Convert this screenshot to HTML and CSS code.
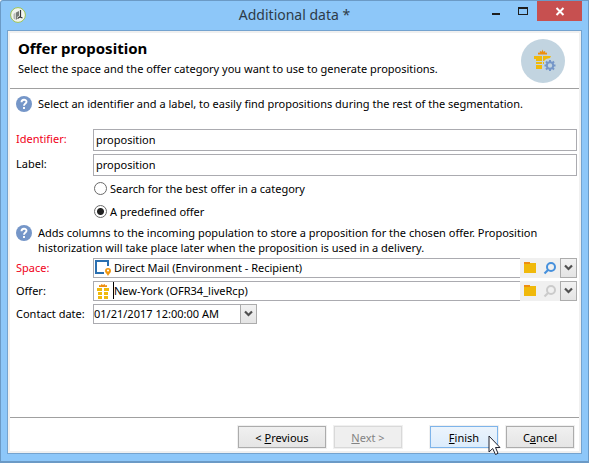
FILE: index.html
```html
<!DOCTYPE html>
<html lang="en">
<head>
<meta charset="utf-8">
<title>Additional data</title>
<link rel="stylesheet" href="styles.css">
</head>
<body>
<div class="window">
  <header class="titlebar">
    <svg class="app-icon" width="16" height="16" viewBox="0 0 16 16" aria-hidden="true">
      <circle cx="8" cy="8" r="7.4" fill="#f1f4ee" stroke="#9dc352"/>
      <path d="M3.500 7 5.500 5.500V13l-2-1.500z" fill="#b4b6b4"/>
      <path d="M6 5.500 9 4v5l-2 1v2.500H6z" fill="#777b78"/>
      <path d="M10.500 3v7M10.500 9.500 7.500 11.500M10 10l2.500 1" stroke="#333" stroke-width="1.200" fill="none"/>
    </svg>
    <h1 class="window-title">Additional data *</h1>
    <div class="window-controls">
      <button class="control" type="button" aria-label="Minimize"><svg width="26" height="20" viewBox="0 0 26 20"><path d="M9 12h8v2H9z" fill="#1e1e1e"/></svg></button>
      <button class="control" type="button" aria-label="Maximize"><svg width="26" height="20" viewBox="0 0 26 20"><path d="M9 6h10v8H9zM10 8v5h8V8z" fill="#1e1e1e" fill-rule="evenodd"/></svg></button>
      <button class="control control-close" type="button" aria-label="Close"><svg width="45" height="20" viewBox="0 0 45 20"><path d="M19.500 7 26.500 14M26.500 7l-7 7" stroke="#fff" stroke-width="2"/></svg></button>
    </div>
  </header>
  <main class="client">
    <section class="banner">
      <div>
        <h2 class="banner-title">Offer proposition</h2>
        <p class="banner-text">Select the space and the offer category you want to use to generate propositions.</p>
      </div>
      <svg class="banner-icon" width="44" height="44" viewBox="0 0 44 44" aria-hidden="true">
        <circle cx="22" cy="22" r="22" fill="#c2d4e0"/>
        <path d="M17 15.500v-2l1.500.5.5-2 1.700.8.800-2.300.8 2.300 1.700-.8.500 2 1.500-.5v2z" fill="#ee8e10"/>
        <path d="M13 17h8v5h-6v-2h-2zM22 17h8l-1 2-4 1-2 2h-1zM15 23h6v2h-6zM22 23h1v2h-1zM15 26h6v4h-6z" fill="#f0b90b"/>
        <path d="M29 21v11M23.500 26.500h11M25 22.500l8 8M33 22.500l-8 8" stroke="#7596c8" stroke-width="2"/>
        <circle cx="29" cy="26.500" r="3.200" fill="#c2d4e0" stroke="#7596c8" stroke-width="2"/>
      </svg>
    </section>
    <form class="form">
      <div class="hint">
        <svg width="16" height="16" viewBox="0 0 16 16" aria-hidden="true"><circle cx="8" cy="8" r="8" fill="#7596c8"/><path d="M5.500 6.200c0-3.200 5-3.200 5-.4C10.500 7.600 8 7.500 8 9.700M8 11v2" fill="none" stroke="#fff" stroke-width="1.900"/></svg>
        <p>Select an identifier and a label, to easily find propositions during the rest of the segmentation.</p>
      </div>
      <div class="row row-text">
        <label class="required" for="identifier">Identifier:</label>
        <input class="text" id="identifier" type="text" value="proposition">
      </div>
      <div class="row row-text">
        <label for="label">Label:</label>
        <input class="text" id="label" type="text" value="proposition">
      </div>
      <div class="choices">
        <label class="choice"><input type="radio" name="mode"> Search for the best offer in a category</label>
        <label class="choice"><input type="radio" name="mode" checked> A predefined offer</label>
      </div>
      <div class="hint">
        <svg width="16" height="16" viewBox="0 0 16 16" aria-hidden="true"><circle cx="8" cy="8" r="8" fill="#7596c8"/><path d="M5.500 6.200c0-3.200 5-3.200 5-.4C10.500 7.600 8 7.500 8 9.700M8 11v2" fill="none" stroke="#fff" stroke-width="1.900"/></svg>
        <p>Adds columns to the incoming population to store a proposition for the chosen offer. Proposition historization will take place later when the proposition is used in a delivery.</p>
      </div>
      <div class="row">
        <label class="required" for="space">Space:</label>
        <div class="picker">
          <svg class="field-icon" width="18" height="18" viewBox="0 0 18 18" aria-hidden="true">
            <path d="M10 14H2V2h12v5" fill="none" stroke="#2a6fb0" stroke-width="2"/>
            <path d="M14 17c-1-2.200-3-3.300-3-5a3 3 0 0 1 6 0c0 1.700-2 2.800-3 5z" fill="#f0960f"/><circle cx="14" cy="11.500" r="1.100" fill="#fff"/>
          </svg>
          <input class="text" id="space" type="text" value="Direct Mail (Environment - Recipient)">
          <button class="tool" type="button" aria-label="Open folder"><svg width="20" height="18" viewBox="0 0 20 18"><path d="M4 3h6v2H4z" fill="#ee8e10"/><path d="M4 5h6v-1h6v10H4z" fill="#f0b90b"/></svg></button>
          <button class="tool" type="button" aria-label="Search"><svg width="20" height="18" viewBox="0 0 20 18"><circle cx="11" cy="8" r="4" fill="none" stroke="#4690dc" stroke-width="2"/><path d="M8 11l-3.500 3.500" stroke="#4690dc" stroke-width="2.200"/></svg></button>
          <button class="drop" type="button" aria-label="Show spaces"><svg width="9" height="8" viewBox="0 0 9 8"><path d="M1 1.500 4.500 5 8 1.500" fill="none" stroke="#505050" stroke-width="2.200"/></svg></button>
        </div>
      </div>
      <div class="row">
        <label for="offer">Offer:</label>
        <div class="picker">
          <svg class="field-icon" width="18" height="18" viewBox="0 0 18 18" aria-hidden="true">
            <path d="M5 5V3l1.500.5L7.500 2l1.500 1L10.500 2l1 1.500L13 3v2z" fill="#ee8e10"/>
            <path d="M3 6h5v3H3zM10 6h5v3h-5zM4 10h4v3H4zM10 10h4v3h-4zM4 14h4v3H4zM10 14h4v3h-4z" fill="#f0b90b"/>
          </svg>
          <span class="caret"></span>
          <input class="text" id="offer" type="text" value="New-York (OFR34_liveRcp)">
          <button class="tool" type="button" aria-label="Open folder"><svg width="20" height="18" viewBox="0 0 20 18"><path d="M4 3h6v2H4z" fill="#ee8e10"/><path d="M4 5h6v-1h6v10H4z" fill="#f0b90b"/></svg></button>
          <button class="tool" type="button" aria-label="Search" disabled><svg width="20" height="18" viewBox="0 0 20 18"><circle cx="11" cy="8" r="4" fill="none" stroke="#cbcbcb" stroke-width="2"/><path d="M8 11l-3.500 3.500" stroke="#cbcbcb" stroke-width="2.200"/></svg></button>
          <button class="drop" type="button" aria-label="Show offers"><svg width="9" height="8" viewBox="0 0 9 8"><path d="M1 1.500 4.500 5 8 1.500" fill="none" stroke="#505050" stroke-width="2.200"/></svg></button>
        </div>
      </div>
      <div class="row">
        <label for="date">Contact date:</label>
        <div class="picker picker-date">
          <input class="text" id="date" type="text" value="01/21/2017 12:00:00 AM">
          <button class="drop" type="button" aria-label="Choose date"><svg width="9" height="8" viewBox="0 0 9 8"><path d="M1 1.500 4.500 5 8 1.500" fill="none" stroke="#505050" stroke-width="2.200"/></svg></button>
        </div>
      </div>
    </form>
    <footer class="actions">
      <button class="button button-wide" type="button">&lt; <u>P</u>revious</button>
      <button class="button" type="button" disabled><u>N</u>ext &gt;</button>
      <button class="button button-default" type="button"><u>F</u>inish
        <svg class="cursor" width="13" height="20" viewBox="0 0 13 20" aria-hidden="true"><path d="M1 1v16l3.700-3.500L7.500 19.500l2.500-1.200L7.500 12.500H12z" fill="#fff" stroke="#23232f"/></svg>
      </button>
      <button class="button" type="button">C<u>a</u>ncel</button>
    </footer>
  </main>
</div>
</body>
</html>
```
FILE: styles.css
```css
* {
  box-sizing: border-box;
}

body {
  margin: 0;
  background: #fff;
  color: #000;
  font: 11px/15px "Noto Sans", "Open Sans", sans-serif;
}

h1, h2, p {
  margin: 0;
  font-weight: normal;
}

button, input {
  margin: 0;
  padding: 0;
  font: inherit;
  color: inherit;
}

svg {
  display: block;
  flex: none;
}

.window {
  display: flex;
  flex-direction: column;
  min-height: calc(100vh - 12px);
  margin: 0 8px 12px 0;
  padding: 0 6px 7px;
  border: 1px solid #6b9ac6;
  border-bottom-width: 2px;
  border-top-left-radius: 3px;
  background: #8dc7f9;
}

.titlebar {
  display: grid;
  grid-template-columns: 1fr auto 1fr;
  align-items: start;
  height: 29px;
}

.app-icon {
  margin: 6px 0 0 3px;
}

.window-title {
  padding-top: 4px;
  font-size: 14px;
  line-height: 20px;
  color: #2d3b48;
}

.window-controls {
  display: flex;
  justify-content: flex-end;
}

.control {
  height: 20px;
  border: 0;
  background: none;
}

.control-close {
  margin-left: 2px;
  background: #c75050;
}

.client {
  display: flex;
  flex: 1;
  flex-direction: column;
  border: 1px solid #74a3cf;
  background: #fff;
  box-shadow: inset 0 0 0 2px #f0f0f0;
}

.banner {
  display: flex;
  justify-content: space-between;
  margin: 2px 2px 0;
  padding: 6px 14px 5px 8px;
  border-bottom: 1px solid #a0a0a0;
}

.banner-title {
  font-size: 15px;
  font-weight: bold;
  line-height: 18px;
}

.banner-text {
  margin-top: 4px;
}

.form {
  display: flex;
  flex: 1;
  flex-direction: column;
  gap: 3px;
  padding: 7px 4px 8px 8px;
}

.hint {
  display: flex;
  gap: 6px;
}

.row {
  display: grid;
  grid-template-columns: 77px 1fr;
  height: 20px;
}

.row label {
  padding-top: 2px;
  white-space: nowrap;
}

.row-text {
  height: 22px;
}

.hint + .row-text {
  margin-top: 14px;
}

.required {
  color: #f00018;
}

.text {
  min-width: 0;
  width: 100%;
  padding: 0 2px 2px;
  border: 1px solid #ababb0;
  background: #fff;
}

.choices {
  display: flex;
  flex-direction: column;
  align-items: flex-start;
  gap: 8px;
  padding: 2px 0 3px 78px;
}

.choice {
  display: flex;
  align-items: center;
  gap: 3px;
}

.choice input {
  appearance: none;
  width: 13px;
  height: 13px;
  border: 1px solid #6a6a6a;
  border-radius: 50%;
  background: #fff;
}

.choice input:checked {
  background: radial-gradient(circle, #222 0 3px, #fff 4px);
}

.picker {
  display: flex;
  position: relative;
  min-width: 0;
}

.picker .text {
  flex: 1;
  border-right: 0;
  padding-left: 20px;
}

.picker-date {
  width: 164px;
}

.picker-date .text {
  padding-left: 0;
}

.field-icon {
  position: absolute;
  top: 1px;
  left: 1px;
}

.caret {
  position: absolute;
  top: 1px;
  left: 20px;
  width: 1px;
  height: 17px;
  background: #000;
}

.tool {
  width: 20px;
  border: 0;
  background: #f0f0f0;
}

.drop {
  display: flex;
  align-items: center;
  justify-content: center;
  width: 17px;
  border: 1px solid #acacac;
  background: linear-gradient(#f2f2f2, #e4e4e4);
}

.actions {
  display: flex;
  gap: 8px;
  justify-content: flex-end;
  margin: 0 2px 2px;
  padding: 8px 5px 3px;
  border-top: 1px solid #a0a0a0;
}

.button {
  position: relative;
  width: 68px;
  height: 22px;
  border: 1px solid #acacac;
  background: linear-gradient(#f0f0f0, #e5e5e5);
  box-shadow: 0 0 0 1px #f0f0f0;
}

.button-wide {
  width: 88px;
}

.button:disabled {
  border-color: #d9d9d9;
  background: #efefef;
  color: #838383;
}

.button-default {
  margin-left: 20px;
  border-color: #7eb4ea;
  background: linear-gradient(#ecf4fc, #dcecfc);
}

.cursor {
  position: absolute;
  top: 8px;
  left: 57px;
}
```
